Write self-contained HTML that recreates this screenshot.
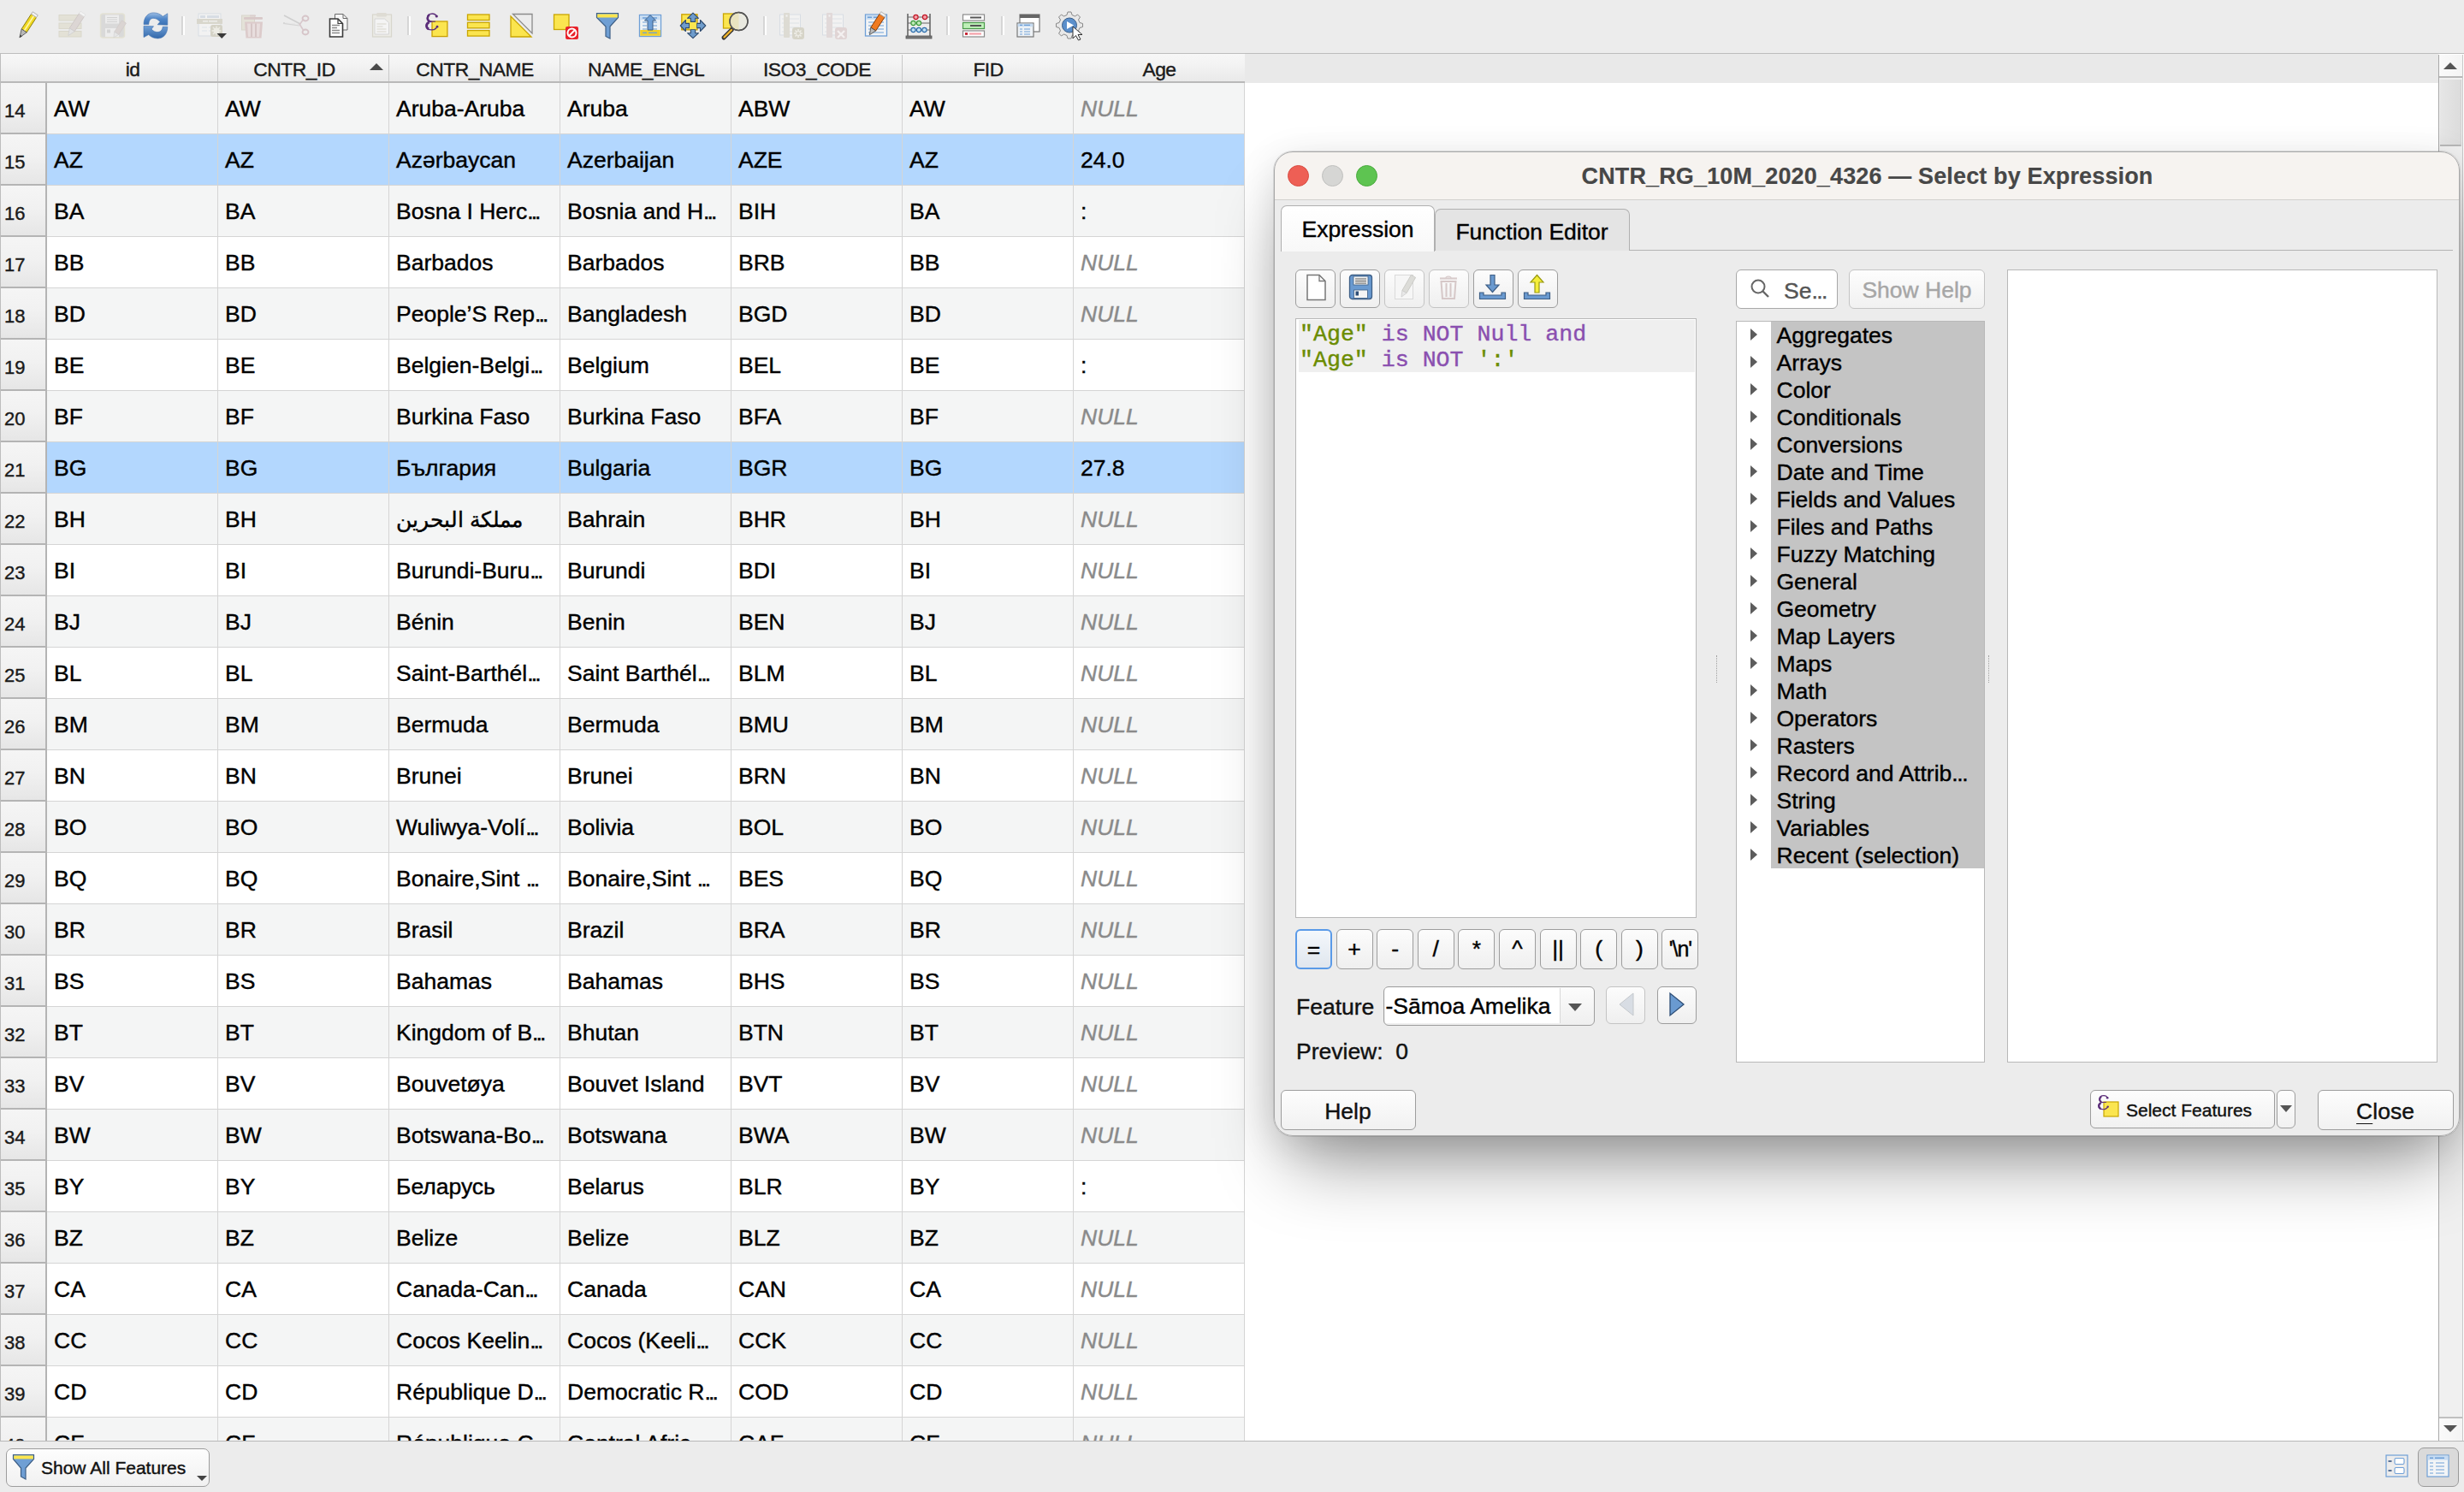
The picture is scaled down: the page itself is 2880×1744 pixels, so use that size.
<!DOCTYPE html><html><head><meta charset="utf-8"><style>
*{margin:0;padding:0;box-sizing:border-box}
html,body{width:2880px;height:1744px;overflow:hidden;background:#ececec;font-family:"Liberation Sans", sans-serif;color:#000}
body{-webkit-text-stroke:0.4px currentColor}
.ic text{-webkit-text-stroke:0}
.abs{position:absolute}
.ic{position:absolute;overflow:visible}
#toolbar{position:absolute;left:0;top:0;width:2880px;height:62px;background:#ececec}
.tsep{position:absolute;top:19px;width:4px;height:22px;border-left:1.5px solid #d4d4d4;background:linear-gradient(90deg,#d8d8d8 0,#d8d8d8 1px,#fff 1px,#fff 3px,transparent 3px)}
#frame{position:absolute;left:0;top:62px;width:2880px;height:1623px;border-top:1px solid #bdbdbd;border-bottom:1px solid #b8b8b8;background:#fff;overflow:hidden}
#frame::before{content:"";position:absolute;left:0;top:0;width:1px;height:100%;background:#bdbdbd;z-index:3}
#hdr{position:absolute;left:0;top:0;width:2850px;height:34px;background:#e9e9e9}
.hc{position:absolute;top:0;height:34px;background:linear-gradient(#f7f7f7 0,#f3f3f3 40%,#e9e9e9 100%);border-bottom:2px solid #b9b9b9;font-size:22.8px;letter-spacing:-0.5px;line-height:34px;padding-top:0.5px;text-align:center;color:#1a1a1a}
.hc::after{content:"";position:absolute;right:0;top:1px;width:1.5px;height:31px;background:#c8c8c8}
.hc.nosep::after{display:none}
.row{position:absolute;left:0;width:1455px;height:60px;background:#fff}
.row.alt{background:#f4f5f5}
.row.sel{background:#fff}
.row.sel .cell{background:#b3d7fe}
.vh{position:absolute;left:1px;top:0;width:54px;height:60px;background:linear-gradient(#f5f5f5 0,#f1f1f1 45%,#e6e6e6 100%);border-right:2px solid #b4b4b4;border-bottom:2px solid #b4b4b4;font-size:22px;line-height:58px;padding-left:4px;padding-top:4px;color:#1a1a1a}
.cell{position:absolute;top:0;width:200px;height:60px;border-right:1px solid #d5d5d5;border-bottom:1px solid #d5d5d5;font-size:26.5px;line-height:60px;padding-left:8px;white-space:nowrap;overflow:hidden}
.el{letter-spacing:-2.9px;padding-right:3px}
.cell.null{font-style:italic;color:#8a8a8a}
.cell.ar{font-size:25px}
#vsb{position:absolute;left:2850px;top:1px;width:29px;height:1621px;background:#f0f0f0;border-left:1.5px solid #a8a8a8;border-right:1px solid #c8c8c8}
#bbar{position:absolute;left:0;top:1685px;width:2880px;height:59px;background:#ececec}
.btn{position:absolute;border:1.6px solid #9d9d9d;border-radius:6px;background:linear-gradient(#fdfdfd,#f1f1f1);font-size:26.5px;text-align:center;color:#111}
#dlgshadow{position:absolute;left:1489px;top:177px;width:1386px;height:1151px;border-radius:22px;box-shadow:0 50px 85px -20px rgba(0,0,0,0.40),0 10px 45px rgba(0,0,0,0.12),0 0 0 1px rgba(0,0,0,0.10)}
#dlg{position:absolute;left:1490px;top:177px;width:1385px;height:1151px;border-radius:22px;background:#ececec;overflow:hidden}
#dlgborder{position:absolute;left:1489px;top:177px;width:1386px;height:1151px;border-radius:22px;border:1px solid #a9a9a9;pointer-events:none}
#title{position:absolute;left:0;top:0;width:100%;height:57px;background:#f6f3f0;border-bottom:1.5px solid #d2d0ce;font-weight:bold;font-size:27px;line-height:58px;text-align:center;color:#474747;letter-spacing:0.14px;-webkit-text-stroke:0.15px currentColor}
.tl{position:absolute;top:16px;width:25px;height:25px;border-radius:50%}
.tab{position:absolute;font-size:26.5px;text-align:center;border:1.5px solid #b0b0b0;border-bottom:none;border-radius:7px 7px 0 0}
.tbb{position:absolute;width:47px;height:45px;border:1.6px solid #9d9d9d;border-radius:6px;background:linear-gradient(#fcfcfc,#efefef)}
.op{position:absolute;top:909px;width:43px;height:47px;border:1.6px solid #9d9d9d;border-radius:6px;background:linear-gradient(#fcfcfc,#efefef);font-size:26.5px;line-height:44px;text-align:center}
.ti{position:absolute;left:47px;height:32px;font-size:26.5px;line-height:32px;white-space:nowrap}
.arr{position:absolute;left:16px;width:0;height:0;border-left:8.5px solid #5c5c5c;border-top:7px solid transparent;border-bottom:7px solid transparent}
.code{position:absolute;font-family:"Liberation Mono",monospace;font-size:26.6px;line-height:30px;white-space:pre}
.g{color:#6b8c00}
.p{color:#8a4fb0}
.lbl{position:absolute;font-size:26.5px;color:#111}
.tbb.dis{border-color:#c4c4c4}
.op.focus{border:2px solid #5a9ae8;background:linear-gradient(#f4f8fc,#e0e6ee)}
</style></head><body>
<div id="toolbar"><svg class="ic" style="left:16px;top:12px" width="32" height="36" viewBox="0 0 32 36">
<g transform="translate(16,18) rotate(33)">
<rect x="-3.6" y="-14" width="7.2" height="21" fill="#f0d820" stroke="#8c7d10" stroke-width="0.9"/>
<rect x="-0.8" y="-14" width="1.8" height="21" fill="#fff6a0"/>
<rect x="-3.6" y="-17" width="7.2" height="3.2" fill="#f2f2f2" stroke="#aaa" stroke-width="0.8"/>
<path d="M-3.6 7 L3.6 7 L0 16.5 Z" fill="#b8b8b8" stroke="#555" stroke-width="0.8"/>
<path d="M-1.6 13.5 L1.6 13.5 L0 17 Z" fill="#444"/>
</g></svg>
<svg class="ic" style="left:68px;top:14px" width="32" height="32" viewBox="0 0 32 32">
<rect x="1" y="3.5" width="26" height="6.5" fill="#e3e1d6" stroke="#d9d7cb"/>
<rect x="1" y="13" width="26" height="6.5" fill="#e3e1d6" stroke="#d9d7cb"/>
<rect x="1" y="22.5" width="26" height="6.5" fill="#e3e1d6" stroke="#d9d7cb"/>
<g transform="translate(20,15) rotate(33)">
<rect x="-3.5" y="-14" width="7" height="21" fill="#dcd6d4" stroke="#ccc6c4" stroke-width="0.8"/>
<rect x="-3.5" y="-16.5" width="7" height="3" fill="#f4f4f4" stroke="#ddd" stroke-width="0.6"/>
<path d="M-3.5 7 L3.5 7 L0 15 Z" fill="#e4e4e4" stroke="#ccc" stroke-width="0.6"/>
</g></svg>
<svg class="ic" style="left:116px;top:14px" width="32" height="32" viewBox="0 0 32 32">
<rect x="1.5" y="2" width="28" height="28" rx="3" fill="#d9d9d9" stroke="#e3e1d4" stroke-width="1.5"/>
<rect x="7" y="3.5" width="16" height="10" fill="#ececec"/>
<path d="M9 6.5h12M9 9h12M9 11.5h12" stroke="#d2d2d2" stroke-width="1"/>
<rect x="7" y="19" width="16" height="10" fill="#ececec"/>
<rect x="9" y="20.5" width="4" height="4" fill="#d4d4d4"/>
<g transform="translate(24,19) rotate(33)">
<rect x="-3" y="-9" width="6" height="16" fill="#dad4d2" stroke="#cfc9c7" stroke-width="0.6"/>
<path d="M-3 7 L3 7 L0 13 Z" fill="#e6e6e6" stroke="#ccc" stroke-width="0.5"/>
</g></svg>
<svg class="ic" style="left:166px;top:14px" width="32" height="32" viewBox="0 0 32 32">
<defs><linearGradient id="rg" x1="0" y1="0" x2="0" y2="1"><stop offset="0" stop-color="#9dbde3"/><stop offset="0.5" stop-color="#4f86c8"/><stop offset="1" stop-color="#3c72b4"/></linearGradient><linearGradient id="rg2" x1="0" y1="0" x2="0" y2="1"><stop offset="0" stop-color="#6f9fd6"/><stop offset="1" stop-color="#3368aa"/></linearGradient></defs>
<path d="M2 14.6 C2 6 7 0.9 13.5 0.9 C18 0.9 21.5 2.5 24.3 5.3 L29.8 1.8 L29.8 15.2 L18.2 14.8 L21 11.5 C19 8.8 16 7.3 13 7.3 C10 7.3 8 10 7.8 14.6 Z" fill="url(#rg)" stroke="#3d6fae" stroke-width="0.6"/>
<path d="M29.8 17.3 C29.8 25.5 25 30.9 18.5 30.9 C14 30.9 10.5 29.3 7.7 26.5 L2 29.6 L2 16.4 L13.5 16.7 L11 20 C13 22.5 15.5 23.5 18 23.5 C21.5 23.5 24 21 24.2 17.3 Z" fill="url(#rg2)" stroke="#3d6fae" stroke-width="0.6"/></svg>
<div class="tsep" style="left:212px"></div>
<svg class="ic" style="left:230px;top:14px" width="38" height="34" viewBox="0 0 38 34">
<rect x="2" y="2" width="26" height="26" fill="#f2f2f2" stroke="#d8dde3"/>
<rect x="4" y="4" width="6" height="3" fill="#d7dde4"/><rect x="12" y="4" width="14" height="3" fill="#d7dde4"/>
<rect x="0" y="8" width="30" height="6" fill="#d8d6cc"/>
<path d="M7 10.8h6M14 10.8h10" stroke="#f2f2f2" stroke-width="1.2"/>
<path d="M6 18h6M14 18h8M6 22h6M14 22h8" stroke="#dde3e8" stroke-width="1"/>
<rect x="16" y="15" width="14" height="14" rx="2.5" fill="#d4d2c6"/>
<circle cx="23" cy="22" r="3.5" fill="#ecebe4"/>
<path d="M23 16.5v11M17.5 22h11M19 18l8 8M27 18l-8 8" stroke="#ecebe4" stroke-width="1.4"/>
<path d="M23.5 25 L35 25 L29.2 31 Z" fill="#3a3a3a"/></svg>
<svg class="ic" style="left:281px;top:16px" width="30" height="32" viewBox="0 0 30 32">
<rect x="1.5" y="2" width="15" height="17" fill="#e4e2d8" stroke="#d8d6cc"/>
<rect x="4" y="4" width="22" height="2.8" rx="1" fill="#d8c8c8"/>
<rect x="11" y="1.5" width="7" height="2" fill="#dccfcf"/>
<path d="M5 9.5 L26 9.5 L24.5 28.5 L6.5 28.5 Z" fill="#dccbcb"/>
<path d="M8 11.5 L23 11.5 L22 27 L9 27 Z" fill="#e8dede"/>
<path d="M13 11.5v15.5M18 11.5v15.5" stroke="#d0bebe" stroke-width="1.5"/></svg>
<svg class="ic" style="left:330px;top:14px" width="32" height="32" viewBox="0 0 32 32">
<path d="M2 4 L21 14" stroke="#cfcfcf" stroke-width="1.6" fill="none"/>
<path d="M1 13 L20 15.5" stroke="#d4d4d4" stroke-width="2.2" fill="none"/>
<path d="M3 12.5 L20 15" stroke="#efefef" stroke-width="0.8" fill="none"/>
<path d="M20 14 L25 22" stroke="#d8c8cc" stroke-width="1.6"/>
<path d="M20 15 L25 8" stroke="#d8c8cc" stroke-width="1.6"/>
<ellipse cx="27" cy="7.5" rx="3.5" ry="3" fill="none" stroke="#d6c4c8" stroke-width="1.8"/>
<ellipse cx="27" cy="23.5" rx="3.5" ry="3" fill="none" stroke="#d6c4c8" stroke-width="1.8"/></svg>
<svg class="ic" style="left:384px;top:14px" width="26" height="32" viewBox="0 0 26 32">
<path d="M7.5 2.5 L17 2.5 L22 7.5 L22 21 L7.5 21 Z" fill="#f6f6f6" stroke="#6a6a6a" stroke-width="1"/>
<path d="M17 2.5 L17 7.5 L22 7.5" fill="none" stroke="#6a6a6a" stroke-width="1"/>
<path d="M1.5 8 L11 8 L16.5 13.5 L16.5 29 L1.5 29 Z" fill="#ffffff" stroke="#3a3a3a" stroke-width="1.6"/>
<path d="M11 8 L11 13.5 L16.5 13.5" fill="none" stroke="#3a3a3a" stroke-width="1.2"/>
<path d="M4 15.5h9M4 18.5h6M4 21.5h9M4 24.5h9" stroke="#8a8a8a" stroke-width="1.3"/></svg>
<svg class="ic" style="left:434px;top:14px" width="26" height="32" viewBox="0 0 26 32">
<rect x="1.5" y="3" width="22" height="26" fill="#ecebe6" stroke="#d8d6cc" stroke-width="1.2"/>
<rect x="6" y="1" width="12" height="4.5" rx="1.5" fill="#dedcd4"/>
<path d="M4 8 L15.5 8 L20.5 12.5 L20.5 26 L4 26 Z" fill="#f4f4f4" stroke="#d6d6d6"/>
<path d="M6.5 14h11M6.5 17h7M6.5 20h11M6.5 23h11" stroke="#d8d6cc" stroke-width="1"/></svg>
<div class="tsep" style="left:476px"></div>
<svg class="ic" style="left:496px;top:14px" width="30" height="32" viewBox="0 0 30 32">
<rect x="9" y="11" width="17.9" height="17.6" fill="#fbe54f" stroke="#c9a000" stroke-width="1.3"/>
<g fill="none" stroke="#5b2d79"><path d="M14.4 5 C13.5 2.8 11.5 2 9.5 2 C6 2 3.5 4 3.5 7 C3.5 9.5 5.5 11.2 8.5 11.2" stroke-width="1.4"/><path d="M6 3.2 C4.3 4.3 3.7 5.6 3.7 7.2 C3.7 8.8 4.5 10 6 10.8" stroke-width="2.6"/><path d="M7 11.2 L12.9 11.2" stroke-width="1.1"/><path d="M8.5 11.2 C4.5 11.2 2.2 13.3 2.2 16 C2.2 19 5 20.9 8.5 20.9 C11.5 20.9 13.8 19.5 15 17.2" stroke-width="1.4"/><path d="M5.5 12 C3.5 13 2.6 14.5 2.6 16.2 C2.6 18 3.5 19.3 5.2 20.1" stroke-width="2.8"/></g><circle cx="14.3" cy="5" r="1.6" fill="#5b2d79"/><circle cx="15" cy="17.2" r="1.4" fill="#5b2d79"/></svg>
<svg class="ic" style="left:545px;top:14px" width="30" height="32" viewBox="0 0 30 32">
<rect x="1.5" y="3" width="25.5" height="6.5" fill="#fbe54f" stroke="#c9a500" stroke-width="1.3"/>
<rect x="1.5" y="12.3" width="25.5" height="6.5" fill="#fbe54f" stroke="#c9a500" stroke-width="1.3"/>
<rect x="1.5" y="21.6" width="25.5" height="6.5" fill="#fbe54f" stroke="#c9a500" stroke-width="1.3"/></svg>
<svg class="ic" style="left:596px;top:14px" width="30" height="32" viewBox="0 0 30 32">
<path d="M3.5 2.5 L26 2.5 L26 25 Z" fill="none" stroke="#8a8a8a" stroke-width="1.3"/>
<path d="M1 5 L1 29 L25 29 Z" fill="#fbe54f" stroke="#c9a500" stroke-width="1.3"/></svg>
<svg class="ic" style="left:646px;top:14px" width="32" height="34" viewBox="0 0 32 34">
<rect x="1.5" y="3" width="17.5" height="17.5" fill="#fbe54f" stroke="#c9a500" stroke-width="1.3"/>
<rect x="15" y="17" width="15" height="15" rx="2" fill="#e8222a"/>
<circle cx="22.5" cy="24.5" r="5" fill="none" stroke="#fff" stroke-width="2"/>
<path d="M19 28 L26 21" stroke="#fff" stroke-width="2"/></svg>
<svg class="ic" style="left:696px;top:14px" width="30" height="34" viewBox="0 0 30 34">
<path d="M1.5 1.5 L26.5 1.5 L26.5 6.5 L17 17 L17 31 L12 28.5 L12 17 L1.5 6.5 Z" fill="#6f9fd4" stroke="#3e5f86" stroke-width="1.2"/>
<rect x="2.2" y="2.5" width="23.6" height="4" fill="#fbe54f"/></svg>
<svg class="ic" style="left:746px;top:14px" width="30" height="32" viewBox="0 0 30 32">
<rect x="1.5" y="3.5" width="25" height="25" fill="#eef2f6" stroke="#6e9fd6" stroke-width="1.3"/>
<rect x="2.2" y="4.2" width="23.6" height="5" fill="#c7dcf2"/>
<path d="M5 7h5M12 7h10" stroke="#6e9fd6" stroke-width="1.4"/>
<path d="M5 12h5M16 12h6M5 16h5M16 16h6M5 20h5M16 20h6" stroke="#6e9fd6" stroke-width="1.1"/>
<rect x="2.2" y="21" width="23.6" height="6.8" fill="#f0cf2a"/>
<path d="M5 24.4h5M12 24.4h10" stroke="#6e9fd6" stroke-width="1.3"/>
<path d="M14 3.5 L20.5 10 L17 10 L17 21 L11 21 L11 10 L7.5 10 Z" fill="#6e9fd6" stroke="#3e5f86" stroke-width="1"/></svg>
<svg class="ic" style="left:794px;top:14px" width="32" height="32" viewBox="0 0 32 32">
<rect x="2.8" y="2.8" width="18.2" height="18" fill="#fbe54f" stroke="#c9a000" stroke-width="1.3"/>
<g fill="#6e9ccc" stroke="#2e4a6e" stroke-width="1.1" stroke-linejoin="round">
<path d="M16 1.1 L22.5 7.3 L18.65 7.3 L18.65 11.4 L13.35 11.4 L13.35 7.3 L9.5 7.3 Z"/>
<path d="M16 30.6 L22.5 24.7 L18.65 24.7 L18.65 20.5 L13.35 20.5 L13.35 24.7 L9.5 24.7 Z"/>
<path d="M1.2 16 L7.4 9.5 L7.4 13.35 L11.6 13.35 L11.6 18.65 L7.4 18.65 L7.4 22.5 Z"/>
<path d="M30.8 16 L24.5 9.5 L24.5 13.35 L20.5 13.35 L20.5 18.65 L24.5 18.65 L24.5 22.5 Z"/>
</g>
<rect x="12.2" y="12.2" width="8" height="8" fill="#fbe54f"/></svg>
<svg class="ic" style="left:843px;top:13px" width="34" height="34" viewBox="0 0 34 34">
<rect x="2.5" y="3" width="15" height="17" fill="#fbe54f" stroke="#c9a500" stroke-width="1.3"/>
<path d="M3 31 L12.5 21.5" stroke="#333" stroke-width="5" stroke-linecap="round"/>
<path d="M3.5 30.5 L12 22" stroke="#f0b429" stroke-width="2.4" stroke-linecap="round"/>
<circle cx="20.5" cy="12" r="10.5" fill="#e9e9e0" stroke="#555" stroke-width="1.4"/>
<path d="M20.5 2 A10 10 0 0 0 20.5 22 Z" fill="#e8e3c0"/>
<circle cx="20.5" cy="12" r="10.5" fill="none" stroke="#555" stroke-width="1.4"/></svg>
<div class="tsep" style="left:892px"></div>
<svg class="ic" style="left:910px;top:14px" width="32" height="34" viewBox="0 0 32 34">
<rect x="1.5" y="3" width="24" height="24" fill="#f2f2f2" stroke="#d8dde3"/>
<path d="M4 8h20M4 13h20M4 18h20M4 23h20" stroke="#dde1e6" stroke-width="1.2"/>
<rect x="6" y="1" width="7" height="29" rx="1" fill="#dddbd3"/>
<rect x="8.5" y="3.5" width="2" height="2" fill="#f4f4f4"/>
<rect x="16" y="18" width="14" height="14" rx="3" fill="#d6d4c8"/>
<path d="M23 20v10M18 25h10M19.5 21.5l7 7M26.5 21.5l-7 7" stroke="#efeee8" stroke-width="1.5"/>
<circle cx="23" cy="25" r="2.5" fill="#d6d4c8" stroke="#efeee8" stroke-width="1"/></svg>
<svg class="ic" style="left:960px;top:14px" width="32" height="34" viewBox="0 0 32 34">
<rect x="1.5" y="3" width="24" height="24" fill="#f2f2f2" stroke="#d8dde3"/>
<path d="M4 8h20M4 13h20M4 18h20M4 23h20" stroke="#dde1e6" stroke-width="1.2"/>
<rect x="6" y="1" width="7" height="29" rx="1" fill="#e1d9d9"/>
<rect x="8.5" y="3.5" width="2" height="2" fill="#f4f4f4"/>
<rect x="16" y="18" width="14" height="14" rx="3" fill="#e0d4d4"/>
<path d="M19 22 L27 30 M27 22 L19 30" stroke="#f4f0f0" stroke-width="2.4"/></svg>
<svg class="ic" style="left:1010px;top:14px" width="30" height="32" viewBox="0 0 30 32">
<rect x="1.5" y="3" width="25" height="25" fill="#f2f4f6" stroke="#6e9fd6" stroke-width="1.3"/>
<rect x="2.2" y="3.7" width="23.6" height="5" fill="#c7dcf2"/>
<path d="M4 6.2h5M11 6.2h5" stroke="#6e9fd6" stroke-width="1.6"/>
<path d="M5 12h18M5 16h18M5 20h18M5 24h18" stroke="#6e9fd6" stroke-width="1.1"/>
<g transform="translate(14,15) rotate(33)">
<rect x="-3.5" y="-13" width="7" height="19" fill="#f07b22" stroke="#8a3a00" stroke-width="0.9"/>
<rect x="-3.5" y="-16" width="7" height="3.2" fill="#eee" stroke="#999" stroke-width="0.6"/>
<path d="M-3.5 6 L3.5 6 L0 14 Z" fill="#bbb" stroke="#444" stroke-width="0.7"/>
</g></svg>
<svg class="ic" style="left:1058px;top:14px" width="32" height="32" viewBox="0 0 32 32">
<path d="M3 2 L3 28 M29 2 L29 28" stroke="#555" stroke-width="1.4"/>
<path d="M3 6h26M3 13h26M3 21h26" stroke="#666" stroke-width="1.2"/>
<rect x="1" y="28" width="30" height="3" fill="#777" stroke="#555" stroke-width="0.8"/>
<circle cx="12.5" cy="6" r="2.6" fill="#f3a0a8" stroke="#c01020" stroke-width="1.1"/>
<circle cx="23" cy="6" r="2.6" fill="#f3a0a8" stroke="#c01020" stroke-width="1.1"/>
<circle cx="9.5" cy="13" r="2.6" fill="#bfeab8" stroke="#3a9a3a" stroke-width="1.1"/>
<circle cx="16" cy="13" r="2.6" fill="#bfeab8" stroke="#3a9a3a" stroke-width="1.1"/>
<circle cx="9.5" cy="21" r="2.6" fill="#bfe0f4" stroke="#2a6aaa" stroke-width="1.1"/>
<circle cx="16" cy="21" r="2.6" fill="#bfe0f4" stroke="#2a6aaa" stroke-width="1.1"/>
<circle cx="22.5" cy="21" r="2.6" fill="#bfe0f4" stroke="#2a6aaa" stroke-width="1.1"/></svg>
<div class="tsep" style="left:1106px"></div>
<svg class="ic" style="left:1124px;top:14px" width="30" height="32" viewBox="0 0 30 32">
<rect x="1.5" y="3" width="25" height="7" fill="#fff" stroke="#8a8a8a" stroke-width="1.2"/>
<path d="M10 6.5h13" stroke="#555" stroke-width="2"/>
<rect x="1.5" y="12.5" width="25" height="7" fill="#bff0b8" stroke="#4a9a4a" stroke-width="1.2"/>
<path d="M10 16h13" stroke="#555" stroke-width="2"/>
<rect x="1.5" y="22" width="25" height="7" fill="#fff" stroke="#8a8a8a" stroke-width="1.2"/>
<rect x="4" y="24.2" width="3" height="2.6" fill="#c01020"/>
<path d="M9 25.5h14" stroke="#f4a0a8" stroke-width="2.2"/></svg>
<div class="tsep" style="left:1170px"></div>
<svg class="ic" style="left:1188px;top:14px" width="30" height="32" viewBox="0 0 30 32">
<rect x="4" y="3" width="23" height="20" fill="#fff" stroke="#777" stroke-width="1.2"/>
<rect x="4" y="3" width="23" height="4" fill="#666"/>
<rect x="1" y="13" width="19" height="16" fill="#eef2f6" stroke="#777" stroke-width="1.2"/>
<rect x="1.6" y="13.6" width="17.8" height="3.5" fill="#c7dcf2"/>
<path d="M4 15.3h3M9 15.3h7M4 20h3M9 20h7M4 23h3M9 23h7M4 26h3M9 26h7" stroke="#6e9fd6" stroke-width="1.2"/></svg>
<svg class="ic" style="left:1234px;top:12px" width="34" height="36" viewBox="0 0 34 36">
<path d="M14 2 L18 2 L19 5.5 L22.5 7 L25.5 5 L28.5 8 L26.5 11 L28 14.5 L31.5 15.5 L31.5 19.5 L28 20.5 L26.5 24 L28.5 27 L25.5 30 L22.5 28 L19 29.5 L18 33 L14 33 L13 29.5 L9.5 28 L6.5 30 L3.5 27 L5.5 24 L4 20.5 L0.5 19.5 L0.5 15.5 L4 14.5 L5.5 11 L3.5 8 L6.5 5 L9.5 7 L13 5.5 Z" fill="#e8e8e8" stroke="#888" stroke-width="1"/>
<circle cx="16" cy="17.5" r="8.5" fill="#5b8fcb" stroke="#3a5f8a" stroke-width="1"/>
<path d="M13 13 L21 17.5 L13 22 Z" fill="#fff"/>
<path d="M20 19 L20 33 L23.5 29.5 L26.5 35 L29 34 L26 28.5 L31 28.5 Z" fill="#fff" stroke="#333" stroke-width="1"/></svg></div>
<div id="frame">
<div id="hdr">
<div class="hc nosep" style="left:0;width:55px"></div>
<div class="hc" style="left:55px;width:200px;">id</div>
<div class="hc" style="left:255px;width:200px;padding-right:22px;">CNTR_ID</div>
<div class="hc" style="left:455px;width:200px;">CNTR_NAME</div>
<div class="hc" style="left:655px;width:200px;">NAME_ENGL</div>
<div class="hc" style="left:855px;width:200px;">ISO3_CODE</div>
<div class="hc" style="left:1055px;width:200px;">FID</div>
<div class="hc nosep" style="left:1255px;width:200px;">Age</div>
<div class="abs" style="left:432px;top:11px;width:0;height:0;border-left:8px solid transparent;border-right:8px solid transparent;border-bottom:8px solid #4a4a4a"></div>
</div>
<div class="row alt" style="top:34px">
<div class="vh">14</div>
<div class="cell" style="left:55px">AW</div>
<div class="cell" style="left:255px">AW</div>
<div class="cell" style="left:455px">Aruba-Aruba</div>
<div class="cell" style="left:655px">Aruba</div>
<div class="cell" style="left:855px">ABW</div>
<div class="cell" style="left:1055px">AW</div>
<div class="cell null" style="left:1255px">NULL</div>
</div>
<div class="row sel" style="top:94px">
<div class="vh">15</div>
<div class="cell" style="left:55px">AZ</div>
<div class="cell" style="left:255px">AZ</div>
<div class="cell" style="left:455px">Azərbaycan</div>
<div class="cell" style="left:655px">Azerbaijan</div>
<div class="cell" style="left:855px">AZE</div>
<div class="cell" style="left:1055px">AZ</div>
<div class="cell" style="left:1255px">24.0</div>
</div>
<div class="row alt" style="top:154px">
<div class="vh">16</div>
<div class="cell" style="left:55px">BA</div>
<div class="cell" style="left:255px">BA</div>
<div class="cell" style="left:455px">Bosna I Herc<span class="el">...</span></div>
<div class="cell" style="left:655px">Bosnia and H<span class="el">...</span></div>
<div class="cell" style="left:855px">BIH</div>
<div class="cell" style="left:1055px">BA</div>
<div class="cell" style="left:1255px">:</div>
</div>
<div class="row" style="top:214px">
<div class="vh">17</div>
<div class="cell" style="left:55px">BB</div>
<div class="cell" style="left:255px">BB</div>
<div class="cell" style="left:455px">Barbados</div>
<div class="cell" style="left:655px">Barbados</div>
<div class="cell" style="left:855px">BRB</div>
<div class="cell" style="left:1055px">BB</div>
<div class="cell null" style="left:1255px">NULL</div>
</div>
<div class="row alt" style="top:274px">
<div class="vh">18</div>
<div class="cell" style="left:55px">BD</div>
<div class="cell" style="left:255px">BD</div>
<div class="cell" style="left:455px">People’S Rep<span class="el">...</span></div>
<div class="cell" style="left:655px">Bangladesh</div>
<div class="cell" style="left:855px">BGD</div>
<div class="cell" style="left:1055px">BD</div>
<div class="cell null" style="left:1255px">NULL</div>
</div>
<div class="row" style="top:334px">
<div class="vh">19</div>
<div class="cell" style="left:55px">BE</div>
<div class="cell" style="left:255px">BE</div>
<div class="cell" style="left:455px">Belgien-Belgi<span class="el">...</span></div>
<div class="cell" style="left:655px">Belgium</div>
<div class="cell" style="left:855px">BEL</div>
<div class="cell" style="left:1055px">BE</div>
<div class="cell" style="left:1255px">:</div>
</div>
<div class="row alt" style="top:394px">
<div class="vh">20</div>
<div class="cell" style="left:55px">BF</div>
<div class="cell" style="left:255px">BF</div>
<div class="cell" style="left:455px">Burkina Faso</div>
<div class="cell" style="left:655px">Burkina Faso</div>
<div class="cell" style="left:855px">BFA</div>
<div class="cell" style="left:1055px">BF</div>
<div class="cell null" style="left:1255px">NULL</div>
</div>
<div class="row sel" style="top:454px">
<div class="vh">21</div>
<div class="cell" style="left:55px">BG</div>
<div class="cell" style="left:255px">BG</div>
<div class="cell" style="left:455px">България</div>
<div class="cell" style="left:655px">Bulgaria</div>
<div class="cell" style="left:855px">BGR</div>
<div class="cell" style="left:1055px">BG</div>
<div class="cell" style="left:1255px">27.8</div>
</div>
<div class="row alt" style="top:514px">
<div class="vh">22</div>
<div class="cell" style="left:55px">BH</div>
<div class="cell" style="left:255px">BH</div>
<div class="cell ar" style="left:455px">مملكة البحرين</div>
<div class="cell" style="left:655px">Bahrain</div>
<div class="cell" style="left:855px">BHR</div>
<div class="cell" style="left:1055px">BH</div>
<div class="cell null" style="left:1255px">NULL</div>
</div>
<div class="row" style="top:574px">
<div class="vh">23</div>
<div class="cell" style="left:55px">BI</div>
<div class="cell" style="left:255px">BI</div>
<div class="cell" style="left:455px">Burundi-Buru<span class="el">...</span></div>
<div class="cell" style="left:655px">Burundi</div>
<div class="cell" style="left:855px">BDI</div>
<div class="cell" style="left:1055px">BI</div>
<div class="cell null" style="left:1255px">NULL</div>
</div>
<div class="row alt" style="top:634px">
<div class="vh">24</div>
<div class="cell" style="left:55px">BJ</div>
<div class="cell" style="left:255px">BJ</div>
<div class="cell" style="left:455px">Bénin</div>
<div class="cell" style="left:655px">Benin</div>
<div class="cell" style="left:855px">BEN</div>
<div class="cell" style="left:1055px">BJ</div>
<div class="cell null" style="left:1255px">NULL</div>
</div>
<div class="row" style="top:694px">
<div class="vh">25</div>
<div class="cell" style="left:55px">BL</div>
<div class="cell" style="left:255px">BL</div>
<div class="cell" style="left:455px">Saint-Barthél<span class="el">...</span></div>
<div class="cell" style="left:655px">Saint Barthél<span class="el">...</span></div>
<div class="cell" style="left:855px">BLM</div>
<div class="cell" style="left:1055px">BL</div>
<div class="cell null" style="left:1255px">NULL</div>
</div>
<div class="row alt" style="top:754px">
<div class="vh">26</div>
<div class="cell" style="left:55px">BM</div>
<div class="cell" style="left:255px">BM</div>
<div class="cell" style="left:455px">Bermuda</div>
<div class="cell" style="left:655px">Bermuda</div>
<div class="cell" style="left:855px">BMU</div>
<div class="cell" style="left:1055px">BM</div>
<div class="cell null" style="left:1255px">NULL</div>
</div>
<div class="row" style="top:814px">
<div class="vh">27</div>
<div class="cell" style="left:55px">BN</div>
<div class="cell" style="left:255px">BN</div>
<div class="cell" style="left:455px">Brunei</div>
<div class="cell" style="left:655px">Brunei</div>
<div class="cell" style="left:855px">BRN</div>
<div class="cell" style="left:1055px">BN</div>
<div class="cell null" style="left:1255px">NULL</div>
</div>
<div class="row alt" style="top:874px">
<div class="vh">28</div>
<div class="cell" style="left:55px">BO</div>
<div class="cell" style="left:255px">BO</div>
<div class="cell" style="left:455px">Wuliwya-Volí<span class="el">...</span></div>
<div class="cell" style="left:655px">Bolivia</div>
<div class="cell" style="left:855px">BOL</div>
<div class="cell" style="left:1055px">BO</div>
<div class="cell null" style="left:1255px">NULL</div>
</div>
<div class="row" style="top:934px">
<div class="vh">29</div>
<div class="cell" style="left:55px">BQ</div>
<div class="cell" style="left:255px">BQ</div>
<div class="cell" style="left:455px">Bonaire,Sint <span class="el">...</span></div>
<div class="cell" style="left:655px">Bonaire,Sint <span class="el">...</span></div>
<div class="cell" style="left:855px">BES</div>
<div class="cell" style="left:1055px">BQ</div>
<div class="cell null" style="left:1255px">NULL</div>
</div>
<div class="row alt" style="top:994px">
<div class="vh">30</div>
<div class="cell" style="left:55px">BR</div>
<div class="cell" style="left:255px">BR</div>
<div class="cell" style="left:455px">Brasil</div>
<div class="cell" style="left:655px">Brazil</div>
<div class="cell" style="left:855px">BRA</div>
<div class="cell" style="left:1055px">BR</div>
<div class="cell null" style="left:1255px">NULL</div>
</div>
<div class="row" style="top:1054px">
<div class="vh">31</div>
<div class="cell" style="left:55px">BS</div>
<div class="cell" style="left:255px">BS</div>
<div class="cell" style="left:455px">Bahamas</div>
<div class="cell" style="left:655px">Bahamas</div>
<div class="cell" style="left:855px">BHS</div>
<div class="cell" style="left:1055px">BS</div>
<div class="cell null" style="left:1255px">NULL</div>
</div>
<div class="row alt" style="top:1114px">
<div class="vh">32</div>
<div class="cell" style="left:55px">BT</div>
<div class="cell" style="left:255px">BT</div>
<div class="cell" style="left:455px">Kingdom of B<span class="el">...</span></div>
<div class="cell" style="left:655px">Bhutan</div>
<div class="cell" style="left:855px">BTN</div>
<div class="cell" style="left:1055px">BT</div>
<div class="cell null" style="left:1255px">NULL</div>
</div>
<div class="row" style="top:1174px">
<div class="vh">33</div>
<div class="cell" style="left:55px">BV</div>
<div class="cell" style="left:255px">BV</div>
<div class="cell" style="left:455px">Bouvetøya</div>
<div class="cell" style="left:655px">Bouvet Island</div>
<div class="cell" style="left:855px">BVT</div>
<div class="cell" style="left:1055px">BV</div>
<div class="cell null" style="left:1255px">NULL</div>
</div>
<div class="row alt" style="top:1234px">
<div class="vh">34</div>
<div class="cell" style="left:55px">BW</div>
<div class="cell" style="left:255px">BW</div>
<div class="cell" style="left:455px">Botswana-Bo<span class="el">...</span></div>
<div class="cell" style="left:655px">Botswana</div>
<div class="cell" style="left:855px">BWA</div>
<div class="cell" style="left:1055px">BW</div>
<div class="cell null" style="left:1255px">NULL</div>
</div>
<div class="row" style="top:1294px">
<div class="vh">35</div>
<div class="cell" style="left:55px">BY</div>
<div class="cell" style="left:255px">BY</div>
<div class="cell" style="left:455px">Беларусь</div>
<div class="cell" style="left:655px">Belarus</div>
<div class="cell" style="left:855px">BLR</div>
<div class="cell" style="left:1055px">BY</div>
<div class="cell" style="left:1255px">:</div>
</div>
<div class="row alt" style="top:1354px">
<div class="vh">36</div>
<div class="cell" style="left:55px">BZ</div>
<div class="cell" style="left:255px">BZ</div>
<div class="cell" style="left:455px">Belize</div>
<div class="cell" style="left:655px">Belize</div>
<div class="cell" style="left:855px">BLZ</div>
<div class="cell" style="left:1055px">BZ</div>
<div class="cell null" style="left:1255px">NULL</div>
</div>
<div class="row" style="top:1414px">
<div class="vh">37</div>
<div class="cell" style="left:55px">CA</div>
<div class="cell" style="left:255px">CA</div>
<div class="cell" style="left:455px">Canada-Can<span class="el">...</span></div>
<div class="cell" style="left:655px">Canada</div>
<div class="cell" style="left:855px">CAN</div>
<div class="cell" style="left:1055px">CA</div>
<div class="cell null" style="left:1255px">NULL</div>
</div>
<div class="row alt" style="top:1474px">
<div class="vh">38</div>
<div class="cell" style="left:55px">CC</div>
<div class="cell" style="left:255px">CC</div>
<div class="cell" style="left:455px">Cocos Keelin<span class="el">...</span></div>
<div class="cell" style="left:655px">Cocos (Keeli<span class="el">...</span></div>
<div class="cell" style="left:855px">CCK</div>
<div class="cell" style="left:1055px">CC</div>
<div class="cell null" style="left:1255px">NULL</div>
</div>
<div class="row" style="top:1534px">
<div class="vh">39</div>
<div class="cell" style="left:55px">CD</div>
<div class="cell" style="left:255px">CD</div>
<div class="cell" style="left:455px">République D<span class="el">...</span></div>
<div class="cell" style="left:655px">Democratic R<span class="el">...</span></div>
<div class="cell" style="left:855px">COD</div>
<div class="cell" style="left:1055px">CD</div>
<div class="cell null" style="left:1255px">NULL</div>
</div>
<div class="row alt" style="top:1594px">
<div class="vh">40</div>
<div class="cell" style="left:55px">CF</div>
<div class="cell" style="left:255px">CF</div>
<div class="cell" style="left:455px">République C<span class="el">...</span></div>
<div class="cell" style="left:655px">Central Afric<span class="el">...</span></div>
<div class="cell" style="left:855px">CAF</div>
<div class="cell" style="left:1055px">CF</div>
<div class="cell null" style="left:1255px">NULL</div>
</div>
<div id="vsb">
<div class="abs" style="left:0;top:0;width:27px;height:27px;background:linear-gradient(90deg,#fafafa,#f4f4f4);border-bottom:2px solid #b8b8b8"></div>
<div class="abs" style="left:5px;top:9px;width:0;height:0;border-left:8px solid transparent;border-right:8px solid transparent;border-bottom:8px solid #555"></div>
<div class="abs" style="left:1px;top:29px;width:25px;height:78px;background:linear-gradient(90deg,#e6e6e6,#dcdcdc);border-bottom:2px solid #b8b8b8;border-right:1px solid #d0d0d0"></div>
<div class="abs" style="left:0;top:1592px;width:27px;height:29px;background:linear-gradient(90deg,#fafafa,#f4f4f4);border-top:2px solid #c0c0c0"></div>
<div class="abs" style="left:5px;top:1602px;width:0;height:0;border-left:8px solid transparent;border-right:8px solid transparent;border-top:8px solid #555"></div>
</div>
</div>
<div id="bbar">
<div class="btn" style="left:7px;top:8px;width:238px;height:45px;border-radius:7px"></div>
<svg class="ic" style="left:14px;top:14px" width="28" height="32" viewBox="0 0 28 32"><path d="M1.5 1.5 L25.5 1.5 L25.5 6.5 L16 17 L16 30 L10.5 27 L10.5 17 L1.5 6.5 Z" fill="#6f9fd4" stroke="#3e5f86" stroke-width="1.2"/><rect x="2.2" y="2.4" width="22.6" height="4" fill="#fbe54f"/></svg>
<div class="abs" style="left:48px;top:8px;font-size:21px;line-height:46px;color:#111">Show All Features</div>
<div class="abs" style="left:230px;top:40px;width:0;height:0;border-left:6px solid transparent;border-right:6px solid transparent;border-top:6px solid #444"></div>
<svg class="ic" style="left:2788px;top:15px" width="28" height="28" viewBox="0 0 28 28"><rect x="1" y="1" width="25" height="25" fill="#ececec" stroke="#6e9fd6" stroke-width="1.2"/><rect x="11" y="4.5" width="11" height="7" rx="1.5" fill="#fff" stroke="#6e9fd6" stroke-width="1.1"/><rect x="11" y="15.5" width="11" height="7" rx="1.5" fill="#fff" stroke="#6e9fd6" stroke-width="1.1"/><path d="M3.5 8h4M3.5 19h4" stroke="#2a4a7a" stroke-width="1.6"/></svg>
<div class="abs" style="left:2826px;top:7px;width:48px;height:46px;border:1.5px solid #9a9a9a;border-radius:7px;background:#dadada"></div>
<svg class="ic" style="left:2836px;top:15px" width="28" height="28" viewBox="0 0 28 28"><rect x="1" y="1" width="25" height="25" fill="#f2f4f6" stroke="#6e9fd6" stroke-width="1.2"/><rect x="1.6" y="1.6" width="23.8" height="5" fill="#c7dcf2"/><path d="M4 4.2h4M10 4.2h11" stroke="#6e9fd6" stroke-width="1.6"/><path d="M4 10h4M11 10h10M4 14h4M11 14h10M4 18h4M11 18h10M4 22h4M11 22h10" stroke="#6e9fd6" stroke-width="1.1"/></svg>
</div>
<div id="dlgshadow"></div><div id="dlg">
<div id="title">CNTR_RG_10M_2020_4326 — Select by Expression</div>
<div class="tl" style="left:15px;background:#ee5f55;border:1px solid #d84c42"></div>
<div class="tl" style="left:55px;background:#d6d6d4;border:1px solid #c0c0be"></div>
<div class="tl" style="left:95px;background:#5ec451;border:1px solid #4aab3e"></div>
<div class="abs" style="left:7px;top:114.5px;width:1370px;height:1.5px;background:#b4b4b4"></div>
<div class="tab" style="left:7px;top:63px;width:180px;height:54px;background:linear-gradient(#ffffff,#f8f8f8);line-height:54px;z-index:2">Expression</div>
<div class="tab" style="left:186.5px;top:67px;width:228px;height:49px;background:#e4e4e4;line-height:52px">Function Editor</div>
<div class="tbb" style="left:24px;top:137.5px"></div>
<svg class="ic" style="left:36px;top:143px" width="32" height="32" viewBox="0 0 32 32"><path d="M2 1.5 L16 1.5 L23 8.5 L23 30.5 L2 30.5 Z" fill="#fff" stroke="#777" stroke-width="1.5"/><path d="M16 1.5 L16 8.5 L23 8.5" fill="none" stroke="#777" stroke-width="1.3"/></svg>
<div class="tbb" style="left:76px;top:137.5px"></div>
<svg class="ic" style="left:86px;top:143px" width="32" height="32" viewBox="0 0 32 32"><rect x="1.5" y="1.5" width="26" height="28" rx="3" fill="#6a9ad0" stroke="#3e5f86" stroke-width="1.3"/><rect x="6" y="3" width="17" height="10" fill="#f4f4f4" stroke="#3e5f86" stroke-width="0.8"/><path d="M8 6h13M8 8.5h13M8 11h13" stroke="#555" stroke-width="1"/><rect x="6.5" y="19" width="16" height="9.5" fill="#f4f4f4" stroke="#3e5f86" stroke-width="0.8"/><rect x="8.5" y="20.5" width="3.5" height="5" fill="#2e4e76"/></svg>
<div class="tbb dis" style="left:128px;top:137.5px"></div>
<svg class="ic" style="left:138px;top:143px" width="32" height="32" viewBox="0 0 32 32"><rect x="2.5" y="1.5" width="21" height="28" fill="#f6f6f6" stroke="#dadada" stroke-width="1"/><g transform="translate(17,15) rotate(30)"><rect x="-3" y="-14" width="6" height="21" fill="#dcdcd8" stroke="#c8c8c4" stroke-width="0.8"/><path d="M-3 7 L3 7 L0 14 Z" fill="#e8e8e8" stroke="#c8c8c8" stroke-width="0.6"/></g></svg>
<div class="tbb dis" style="left:180px;top:137.5px"></div>
<svg class="ic" style="left:190px;top:143px" width="32" height="32" viewBox="0 0 32 32"><path d="M3 5.5h20" stroke="#d8cccc" stroke-width="2.2"/><path d="M10 5 C10 2.5 16 2.5 16 5" fill="none" stroke="#d8cccc" stroke-width="1.4"/><path d="M4.5 9 L21.5 9 L20 29 L6 29 Z" fill="none" stroke="#d6c8c8" stroke-width="2"/><path d="M10.5 11v16M15.5 11v16" stroke="#d6c8c8" stroke-width="2"/></svg>
<div class="tbb" style="left:232px;top:137.5px"></div>
<svg class="ic" style="left:239px;top:143px" width="32" height="32" viewBox="0 0 32 32"><path d="M13 1.5 L18 1.5 L18 13 L23 13 L15.5 21.5 L8 13 L13 13 Z" fill="#6a9ad0" stroke="#3e5f86" stroke-width="1.2"/><path d="M0.5 22 L5 22 L5 25 L26 25 L26 22 L30.5 22 L30.5 29.5 L0.5 29.5 Z" fill="#6a9ad0" stroke="#3e5f86" stroke-width="1.2"/></svg>
<div class="tbb" style="left:284px;top:137.5px"></div>
<svg class="ic" style="left:291px;top:143px" width="32" height="32" viewBox="0 0 32 32"><path d="M15.5 1.5 L23 10 L18 10 L18 22 L13 22 L13 10 L8 10 Z" fill="#f4ee3a" stroke="#9a9a10" stroke-width="1.2"/><path d="M0.5 22 L5 22 L5 25 L26 25 L26 22 L30.5 22 L30.5 29.5 L0.5 29.5 Z" fill="#6a9ad0" stroke="#3e5f86" stroke-width="1.2"/></svg>
<div class="abs" style="left:24px;top:195px;width:469px;height:701px;background:#fff;border:1.5px solid #b8b8b8"></div>
<div class="abs" style="left:28px;top:196.5px;width:463px;height:61px;background:#efefef"></div>
<div class="code" style="left:29px;top:199px"><span class="g">"Age"</span> <span class="p">is NOT Null and</span><br><span class="g">"Age"</span> <span class="p">is NOT</span> <span class="g">':'</span></div>
<div class="op focus" style="left:24.0px;">=</div>
<div class="op" style="left:71.6px;">+</div>
<div class="op" style="left:119.2px;">-</div>
<div class="op" style="left:166.8px;">/</div>
<div class="op" style="left:214.4px;">*</div>
<div class="op" style="left:262.0px;">^</div>
<div class="op" style="left:309.6px;">||</div>
<div class="op" style="left:357.2px;">(</div>
<div class="op" style="left:404.8px;">)</div>
<div class="op" style="left:452.4px;font-size:25px;letter-spacing:-1px;">'\n'</div>
<div class="lbl" style="left:25px;top:976.5px;line-height:46px">Feature</div>
<div class="abs" style="left:126.5px;top:976px;width:247px;height:46px;border:1.6px solid #9d9d9d;border-radius:6px;background:linear-gradient(#fcfcfc,#efefef);overflow:hidden"><div class="abs" style="left:1px;top:1px;width:205px;height:41px;background:#fff;border-right:1px solid #d8d8d8"></div><div class="abs" style="left:2px;top:0;font-size:26.5px;line-height:44px;white-space:nowrap">-Sāmoa Amelika</div><div class="abs" style="left:215px;top:19px;width:0;height:0;border-left:8px solid transparent;border-right:8px solid transparent;border-top:9px solid #555"></div></div>
<div class="tbb dis" style="left:387px;top:976px;width:46px;height:44px"></div>
<svg class="ic" style="left:400px;top:982px" width="22" height="30" viewBox="0 0 22 30"><path d="M19 2 L19 28 L3 15 Z" fill="#d8dde4" stroke="#c4c8cc" stroke-width="1"/></svg>
<div class="tbb" style="left:447px;top:976px;width:46px;height:44px"></div>
<svg class="ic" style="left:459px;top:982px" width="22" height="30" viewBox="0 0 22 30"><path d="M3 2 L3 28 L19 15 Z" fill="#6a9ad0" stroke="#2e4e76" stroke-width="1.3"/></svg>
<div class="lbl" style="left:25px;top:1029px;line-height:46px;white-space:pre">Preview:  0</div>
<div class="abs" style="left:516px;top:589px;width:1.5px;height:32px;border-left:1.5px dotted #a0a0a0"></div>
<div class="abs" style="left:834px;top:589px;width:1.5px;height:32px;border-left:1.5px dotted #a0a0a0"></div>
<div class="abs" style="left:538.5px;top:137.5px;width:119px;height:46px;border:1.5px solid #a8a8a8;border-radius:6px;background:#fff"></div>
<svg class="ic" style="left:555px;top:148px" width="24" height="26" viewBox="0 0 24 26"><circle cx="10" cy="10" r="7.5" fill="none" stroke="#666" stroke-width="2"/><path d="M15.5 15.5 L22 22" stroke="#666" stroke-width="2.4"/></svg>
<div class="abs" style="left:595px;top:139.5px;font-size:26.5px;line-height:46px;color:#555">Se<span class="el" style="letter-spacing:-1.6px">...</span></div>
<div class="btn" style="left:671px;top:137.5px;width:159px;height:46px;line-height:46px;color:#a6a6a6;border-color:#c4c4c4">Show Help</div>
<div class="abs" style="left:538.5px;top:197.5px;width:291px;height:867px;background:#fff;border:1.5px solid #b8b8b8;overflow:hidden">
<div class="abs" style="left:40px;top:0;width:249px;height:639px;background:#c4c4c4"></div>
<div class="ti" style="top:0px">Aggregates</div>
<div class="arr" style="top:8px"></div>
<div class="ti" style="top:32px">Arrays</div>
<div class="arr" style="top:40px"></div>
<div class="ti" style="top:64px">Color</div>
<div class="arr" style="top:72px"></div>
<div class="ti" style="top:96px">Conditionals</div>
<div class="arr" style="top:104px"></div>
<div class="ti" style="top:128px">Conversions</div>
<div class="arr" style="top:136px"></div>
<div class="ti" style="top:160px">Date and Time</div>
<div class="arr" style="top:168px"></div>
<div class="ti" style="top:192px">Fields and Values</div>
<div class="arr" style="top:200px"></div>
<div class="ti" style="top:224px">Files and Paths</div>
<div class="arr" style="top:232px"></div>
<div class="ti" style="top:256px">Fuzzy Matching</div>
<div class="arr" style="top:264px"></div>
<div class="ti" style="top:288px">General</div>
<div class="arr" style="top:296px"></div>
<div class="ti" style="top:320px">Geometry</div>
<div class="arr" style="top:328px"></div>
<div class="ti" style="top:352px">Map Layers</div>
<div class="arr" style="top:360px"></div>
<div class="ti" style="top:384px">Maps</div>
<div class="arr" style="top:392px"></div>
<div class="ti" style="top:416px">Math</div>
<div class="arr" style="top:424px"></div>
<div class="ti" style="top:448px">Operators</div>
<div class="arr" style="top:456px"></div>
<div class="ti" style="top:480px">Rasters</div>
<div class="arr" style="top:488px"></div>
<div class="ti" style="top:512px">Record and Attrib<span class="el" style="letter-spacing:-1.4px">...</span></div>
<div class="arr" style="top:520px"></div>
<div class="ti" style="top:544px">String</div>
<div class="arr" style="top:552px"></div>
<div class="ti" style="top:576px">Variables</div>
<div class="arr" style="top:584px"></div>
<div class="ti" style="top:608px">Recent (selection)</div>
<div class="arr" style="top:616px"></div>
</div>
<div class="abs" style="left:856px;top:137.5px;width:503px;height:927px;background:#fff;border:1.5px solid #b8b8b8"></div>
<div class="btn" style="left:6.5px;top:1097px;width:158px;height:47px;line-height:49px">Help</div>
<div class="btn" style="left:953px;top:1096.5px;width:216px;height:45.5px"></div>
<svg class="ic" style="left:961px;top:1102px" width="30" height="30" viewBox="0 0 30 30"><rect x="8" y="9" width="17" height="17" fill="#fbe54f" stroke="#c9a500" stroke-width="1.2"/><g transform="translate(0,0) scale(0.85)"><g fill="none" stroke="#5b2d79"><path d="M14.4 5 C13.5 2.8 11.5 2 9.5 2 C6 2 3.5 4 3.5 7 C3.5 9.5 5.5 11.2 8.5 11.2" stroke-width="1.4"/><path d="M6 3.2 C4.3 4.3 3.7 5.6 3.7 7.2 C3.7 8.8 4.5 10 6 10.8" stroke-width="2.6"/><path d="M7 11.2 L12.9 11.2" stroke-width="1.1"/><path d="M8.5 11.2 C4.5 11.2 2.2 13.3 2.2 16 C2.2 19 5 20.9 8.5 20.9 C11.5 20.9 13.8 19.5 15 17.2" stroke-width="1.4"/><path d="M5.5 12 C3.5 13 2.6 14.5 2.6 16.2 C2.6 18 3.5 19.3 5.2 20.1" stroke-width="2.8"/></g><circle cx="14.3" cy="5" r="1.6" fill="#5b2d79"/><circle cx="15" cy="17.2" r="1.4" fill="#5b2d79"/></g></svg>
<div class="abs" style="left:995px;top:1097.5px;font-size:21px;line-height:45px;color:#111">Select Features</div>
<div class="btn" style="left:1171px;top:1096.5px;width:22px;height:45.5px"></div>
<div class="abs" style="left:1175px;top:1115px;width:0;height:0;border-left:7px solid transparent;border-right:7px solid transparent;border-top:8px solid #555"></div>
<div class="btn" style="left:1218.5px;top:1097px;width:159px;height:47px;line-height:49px"><span style="text-decoration:underline;text-decoration-thickness:1px;text-underline-offset:5px">C</span>lose</div>
</div><div id="dlgborder"></div>
</body></html>
